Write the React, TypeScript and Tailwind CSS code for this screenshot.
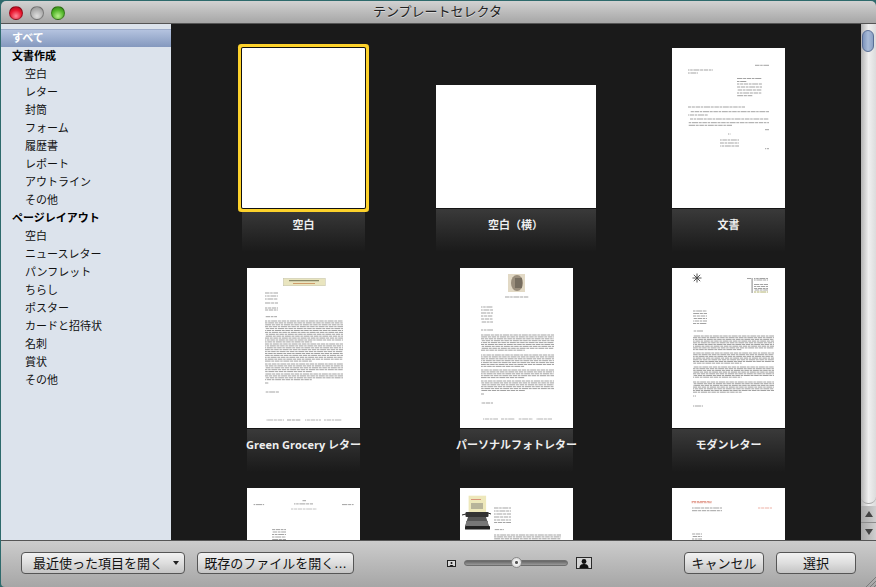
import type { ReactNode } from "react"

type Line = [number, number, number, string?]

const group1 = ["空白", "レター", "封筒", "フォーム", "履歴書", "レポート", "アウトライン", "その他"]
const group2 = ["空白", "ニュースレター", "パンフレット", "ちらし", "ポスター", "カードと招待状", "名刺", "賞状", "その他"]

// greeked paragraph: full width rows, last one shorter
const para = (x: number, y0: number, y1: number, w: number, step = 1.9): Line[] => {
  const rows: Line[] = []
  for (let y = y0; y <= y1; y += step) rows.push([x, y, w])
  rows[rows.length - 1][2] = w * 0.6
  return rows
}

const stack = (x: number, w: number, ys: number[], color?: string): Line[] => ys.map((y) => [x, y, w, color])

const Page = ({ lines, children }: { lines: Line[]; children?: ReactNode }) => (
  <svg viewBox="0 0 113 160" className="w-[113px] h-[160px] bg-white block">
    {children}
    {lines.map(([x, y, w, c], i) => (
      <line
        key={i}
        x1={x}
        x2={x + w}
        y1={y}
        y2={y}
        stroke={c ?? "#989898"}
        strokeWidth={0.9}
        strokeDasharray="4.5 0.7 2.5 0.7 6 0.7 3 0.7"
        strokeDashoffset={i * 3}
      />
    ))}
  </svg>
)

const docLines: Line[] = [
  [83, 17.3, 14],
  ...stack(16, 25, [22]),
  [16, 25, 10],
  ...stack(65, 25, [30.5, 36, 39, 42, 45]),
  [65, 33.5, 10],
  [65, 47.7, 16],
  [16, 59, 57],
  [18, 63.7, 79],
  [16, 67, 20],
  [18, 71, 79],
  [16, 74.7, 81],
  [16, 77.3, 44],
  [93, 81.7, 4],
  [56, 86, 2.5],
  ...stack(48, 19, [92, 95, 98]),
  [93, 100.7, 4],
]

const greenLines: Line[] = [
  ...stack(18, 13, [25, 28, 31, 35, 40, 42]),
  [18, 48.7, 12],
  ...para(18, 53, 74, 78),
  ...para(18, 76, 94, 78),
  ...para(18, 96, 104, 78),
  ...para(18, 106, 112, 78),
  [18, 115, 4],
  [18, 124, 14],
  [19, 152, 18, "#aaa"],
  [40, 152, 14, "#999"],
  [58, 152, 16, "#aaa"],
  [77, 152, 18, "#aaa"],
]

const photoLines: Line[] = [
  [45, 29, 24],
  ...stack(21, 12, [39, 42, 45, 48, 51, 54]),
  [21, 62, 12],
  ...para(21, 67, 83, 73),
  ...para(21, 87, 99, 73),
  ...para(21, 102, 110, 73),
  ...para(21, 113, 123, 73),
  [21, 126, 3],
  [21, 135, 12],
  [23, 151, 15, "#aaa"],
  [41, 151, 14, "#aaa"],
  [58, 151, 15, "#aaa"],
  [76, 151, 16, "#aaa"],
]

const modernLines: Line[] = [
  [75, 10.5, 4],
  ...stack(82, 14, [10.5, 12, 16.5, 18.5, 20.5, 22]),
  [82, 24, 14, "#a8a860"],
  ...stack(21, 14, [43, 45.5, 48, 50.5, 53, 55.5]),
  [21, 63, 10],
  ...para(21, 68, 82, 81, 1.7),
  ...para(21, 85, 96, 81, 1.7),
  ...para(21, 99, 110, 81, 1.7),
  ...para(21, 114, 125, 81, 1.7),
  [21, 128, 3],
  [21, 138, 10],
]

const row3a: Line[] = [
  [55.5, 12.7, 3.5],
  [47, 15.9, 19],
  [6.6, 16.6, 10.5],
  [95, 16.6, 11.6],
  [44, 21, 26, "#bbb"],
  ...stack(25, 14, [41.6, 44, 46.5, 49, 51.5, 54]),
]

const row3b: Line[] = [
  ...stack(34, 17, [20, 23, 26, 29, 32, 34.5]),
  [34, 41.6, 10],
  ...para(34, 47, 56, 67),
]

const row3c: Line[] = [
  [19.6, 13.5, 20, "#e29a8c"],
  [19.6, 14.7, 20, "#e29a8c"],
  [20, 20, 30],
  [20, 22.7, 30],
  [86, 20, 14, "#eba89c"],
  ...stack(20, 10, [46, 48.5, 51, 53.5]),
]

const GreenGrocery = () => (
  <Page lines={greenLines}>
    <rect x="36.3" y="10.3" width="42" height="7.5" fill="#e9e5bf" stroke="#b9b8a0" strokeWidth="0.4" />
    <rect x="42" y="12.2" width="30" height="1" fill="#6f6f50" />
    <rect x="46" y="15" width="22" height="0.8" fill="#c98a55" />
  </Page>
)

const Photo = () => (
  <Page lines={photoLines}>
    <rect x="48" y="6" width="17" height="18" fill="#e2d9c5" />
    <ellipse cx="57" cy="15" rx="6" ry="8" fill="#9a8e7c" />
    <rect x="55" y="10" width="7" height="10" fill="#5f574d" opacity="0.6" />
  </Page>
)

const Modern = () => (
  <Page lines={modernLines}>
    <rect x="79.5" y="10" width="1.2" height="15" fill="#999" />
    <g stroke="#444" strokeWidth="0.9">
      <path d="M25 5.5v9M20.5 10h9M21.8 6.8l6.4 6.4M21.8 13.2l6.4-6.4" />
    </g>
  </Page>
)

const Typewriter = () => (
  <Page lines={row3b}>
    <rect x="8.6" y="7.7" width="17.5" height="20" fill="#eee8bb" />
    <rect x="11" y="11" width="10" height="1" fill="#d8937a" />
    <rect x="11" y="15" width="12" height="6" fill="#b8b49a" />
    <rect x="5.5" y="24" width="23" height="5" rx="1" fill="#333" />
    <path d="M2 27l4-1M28 25l3 1" stroke="#222" strokeWidth="1" />
    <path d="M8 29h18l3 9H5z" fill="#555" />
    <rect x="6" y="33" width="22" height="5" fill="#777" />
    <rect x="5" y="38" width="25" height="3.5" rx="0.6" fill="#222" />
  </Page>
)

const Blank = ({ className }: { className: string }) => <div className={`bg-white ${className}`} />

const Thumb = ({ label, width = "w-[113px]", page }: { label: string; width?: string; page: ReactNode }) => (
  <div className="flex flex-col items-center">
    <div className="h-[160px] flex items-end">{page}</div>
    <div className={`${width} h-[44px] mb-[16px] border-t border-[#151515] bg-gradient-to-b from-[#3a3a3a] to-[#1a1a1a] flex justify-center pt-[8px]`}>
      <span className="whitespace-nowrap font-['Open_Sans','Noto_Sans_CJK_JP',sans-serif] text-[11px] leading-[16px] font-bold text-[#eeeeee]">{label}</span>
    </div>
  </div>
)

const SideRow = ({ text, kind }: { text: string; kind: "all" | "head" | "item" }) => (
  <div
    className={
      kind === "all"
        ? "h-[18px] pl-[11px] pt-[2px] flex items-center text-[11px] font-bold text-white border-t border-[#9dacca] bg-gradient-to-b from-[#b4c3df] to-[#8498be]"
        : kind === "head"
          ? "h-[18px] pl-[11px] pt-[2px] flex items-center text-[11px] font-bold text-black"
          : "h-[18px] pl-[24px] pt-[2px] flex items-center text-[11px] text-[#111111]"
    }
  >
    {text}
  </div>
)

const Btn = ({ className, children }: { className: string; children: ReactNode }) => (
  <button className={`h-[22px] rounded-[4px] border border-[#555555] bg-gradient-to-b from-[#f2f2f2] via-[#dedede] to-[#c4c4c4] text-[13px] leading-none text-[#111111] flex items-center ${className}`}>
    {children}
  </button>
)

const Light = ({ className }: { className: string }) => (
  <div className={`w-[14px] h-[14px] rounded-full border border-black/30 ${className}`} />
)

const App = () => {
  return (
    <div className="w-[876px] h-[587px] pl-px pt-px bg-[#2e6a6c] overflow-hidden font-['DejaVu_Sans','Noto_Sans_CJK_JP',sans-serif]">
      <div className="w-[875px] h-[586px] flex flex-col overflow-hidden rounded-t-[5px] rounded-bl-[4px]">
        {/* title bar */}
        <div className="h-[23px] shrink-0 relative flex items-center justify-center pr-[2px] border-b border-[#555555] bg-gradient-to-b from-[#d2d2d2] to-[#a6a6a6]">
          <div className="absolute left-[8px] top-[5px] flex gap-[7px]">
            <Light className="bg-[radial-gradient(circle_at_50%_75%,#ff8a9a,#e8142c_55%,#a00818)]" />
            <Light className="bg-[radial-gradient(circle_at_50%_75%,#dedede,#adadad_60%,#8c8c8c)]" />
            <Light className="bg-[radial-gradient(circle_at_50%_75%,#b6f08a,#52b52a_55%,#2c7a12)]" />
          </div>
          <span className="text-[13px] text-[#222222] [text-shadow:0_1px_0_#d8d8d8]">テンプレートセレクタ</span>
        </div>

        <div className="flex-1 flex min-h-0">
          {/* sidebar */}
          <div className="w-[170px] shrink-0 pt-[5px] bg-[#dce3ec]">
            <SideRow text="すべて" kind="all" />
            <SideRow text="文書作成" kind="head" />
            {group1.map((t, i) => (
              <SideRow key={i} text={t} kind="item" />
            ))}
            <SideRow text="ページレイアウト" kind="head" />
            {group2.map((t, i) => (
              <SideRow key={i} text={t} kind="item" />
            ))}
          </div>

          {/* thumbnails */}
          <div className="flex-1 min-w-0 overflow-hidden bg-[#1a1a1a] pt-[24px] pl-[27px]">
            <div className="grid grid-cols-[211px_215px_209px]">
              <Thumb label="空白" width="w-[123px]" page={<Blank className="relative z-10 w-[123px] h-[160px] rounded-[1px] shadow-[0_0_0_1px_#111111,0_0_0_4px_#fdd22b]" />} />
              <Thumb label="空白（横）" width="w-[160px] mr-[2px]" page={<Blank className="w-[160px] h-[123px] mr-[2px]" />} />
              <Thumb label="文書" page={<Page lines={docLines} />} />
              <Thumb label="Green Grocery レター" page={<GreenGrocery />} />
              <Thumb label="パーソナルフォトレター" page={<Photo />} />
              <Thumb label="モダンレター" page={<Modern />} />
              <Thumb label="" page={<Page lines={row3a} />} />
              <Thumb label="" page={<Typewriter />} />
              <Thumb label="" page={<Page lines={row3c} />} />
            </div>
          </div>

          {/* scrollbar */}
          <div className="w-[15px] shrink-0 flex flex-col bg-gradient-to-r from-[#b4b4b4] via-[#f0f0f0] to-[#dcdcdc]">
            <div className="flex-1 relative">
              <div className="absolute left-px top-[6px] w-[12px] h-[22px] rounded-[6px] border border-[#5a6f96] bg-gradient-to-r from-[#7d94bb] via-[#a9bcd8] to-[#8aa0c4]" />
              <div className="absolute inset-x-0 bottom-0 h-[10px] rounded-b-[7px] border-b border-[#a5a5a5]" />
            </div>
            <div className="h-[17px] mt-[2px] flex items-center justify-center border-b border-[#8c8c8c] bg-gradient-to-r from-[#a8a8a8] to-[#cfcfcf]">
              <div className="w-0 h-0 border-x-[4px] border-x-transparent border-b-[6px] border-b-[#444444]" />
            </div>
            <div className="h-[17px] flex items-center justify-center bg-gradient-to-r from-[#a8a8a8] to-[#cfcfcf]">
              <div className="w-0 h-0 border-x-[4px] border-x-transparent border-t-[6px] border-t-[#444444]" />
            </div>
          </div>
        </div>

        {/* bottom bar */}
        <div className="h-[47px] shrink-0 relative flex items-center pl-[20px] pr-[20px] pb-[2px] border-t border-[#555555] bg-gradient-to-b from-[#cccccc] to-[#a6a6a6]">
          <Btn className="w-[164px] pl-[11px] pr-[5px] justify-between">
            最近使った項目を開く
            <span className="w-0 h-0 border-x-[3.5px] border-x-transparent border-t-[4px] border-t-[#222222]" />
          </Btn>
          <Btn className="w-[157px] ml-[12px] justify-center">既存のファイルを開く...</Btn>

          <svg viewBox="0 0 9 7" className="w-[9px] h-[7px] ml-[93px] shrink-0">
            <rect width="9" height="7" fill="#222" />
            <rect x="1" y="1" width="7" height="5" fill="#d8d8d8" />
            <circle cx="4.5" cy="3" r="1" fill="#111" />
            <path d="M2.5 6c0-1.5 4-1.5 4 0z" fill="#111" />
          </svg>
          <div className="w-[104px] h-[6px] ml-[8px] relative rounded-full border border-[#6e6e6e] bg-gradient-to-b from-[#666666] to-[#9a9a9a]">
            <div className="absolute left-[46px] -top-[4px] w-[11px] h-[11px] rounded-full border border-[#8a8a8a] bg-[radial-gradient(circle,#555555_0,#555555_18%,#f4f4f4_30%,#c8c8c8)]" />
          </div>
          <svg viewBox="0 0 16 12" className="w-[16px] h-[12px] ml-[8px] shrink-0">
            <rect width="16" height="12" fill="#2a2a2a" />
            <rect x="1" y="1" width="14" height="10" fill="#d4d4d4" />
            <circle cx="8" cy="4.5" r="2.4" fill="#111" />
            <path d="M3.5 11c0-3.5 2.5-4 4.5-4s4.5.5 4.5 4z" fill="#111" />
          </svg>

          <Btn className="w-[80px] ml-auto justify-center">キャンセル</Btn>
          <Btn className="w-[80px] ml-[12px] justify-center">選択</Btn>

          <svg viewBox="0 0 11 11" className="absolute right-0 bottom-0 w-[11px] h-[11px]">
            <path d="M1 11L11 1M5 11l6-6M9 11l2-2" stroke="#6f6f6f" strokeWidth="0.8" />
          </svg>
        </div>
      </div>
    </div>
  )
}

export default App
